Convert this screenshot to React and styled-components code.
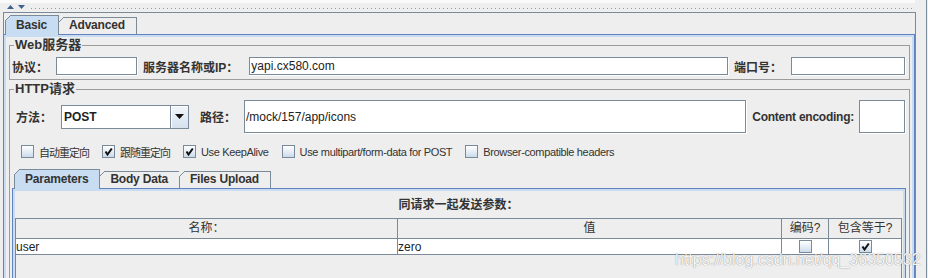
import styled, { createGlobalStyle } from "styled-components";

const GlobalStyle = createGlobalStyle`
  html, body {
    margin: 0;
    padding: 0;
    background: #eeeeee;
  }
  body {
    font-family: "Liberation Sans", "Noto Sans CJK SC", sans-serif;
    font-size: 12px;
    color: #333333;
  }
`;

const Page = styled.div`
  position: relative;
  display: flex;
  align-items: flex-start;
  width: 928px;
  height: 278px;
  overflow: hidden;
  background: #eeeeee;
`;

const Main = styled.div`
  flex: none;
  width: 916px;
`;

const Gutter = styled.div`
  align-self: stretch;
  flex: 1;
  margin-right: 1px;
  border-right: 1px solid #7a8a99;
`;

const TopStrip = styled.div`
  width: 915px;
  height: 3px;
  background: #fafafa;
`;

const SplitBar = styled.div`
  display: flex;
  align-items: flex-start;
  height: 9px;
  padding-left: 7px;
  gap: 4px;
  svg {
    margin-top: 2px;
  }
`;

const Dots = styled.div`
  flex: 1;
  height: 1px;
  margin: 5px 3px 0 2px;
  background-image: linear-gradient(to right, #8c99a6 1px, transparent 1px);
  background-size: 4px 1px;
`;

const Frame = styled.div`
  box-sizing: border-box;
  width: 913px;
  margin-left: 3px;
  padding-top: 2px;
  border: 1px solid #7a8a99;
  border-bottom: none;
`;

const TabRow = styled.div`
  display: flex;
  align-items: flex-end;
  height: 19px;
  padding-left: ${(p) => p.$pl}px;
  margin-top: ${(p) => p.$mt || 0}px;
`;

const Tab = styled.div`
  position: relative;
  box-sizing: border-box;
  height: ${(p) => (p.$active ? 20 : 17)}px;
  margin-bottom: ${(p) => (p.$active ? -1 : 0)}px;
  margin-left: -1px;
  padding: 0 11px 0 10px;
  border: 1px solid #7a8a99;
  border-bottom: none;
  background: ${(p) => (p.$active ? "#c8ddf2" : "#eeeeee")};
  font-weight: bold;
  font-size: 12px;
  letter-spacing: -0.2px;
  line-height: ${(p) => (p.$active ? 18 : 15)}px;
  color: #333333;
  white-space: nowrap;
  z-index: ${(p) => (p.$active ? 1 : 0)};
  &:first-child {
    margin-left: 0;
  }
  &::before {
    content: "";
    position: absolute;
    left: -1px;
    top: -1px;
    width: 6px;
    height: 6px;
    background: linear-gradient(
      to bottom right,
      #eeeeee 0 calc(50% - 0.6px),
      #7a8a99 calc(50% - 0.6px) calc(50% + 0.6px),
      transparent calc(50% + 0.6px)
    );
  }
`;

const TabPanel = styled.div`
  box-sizing: border-box;
  margin-left: ${(p) => (p.$outer ? -1 : 0)}px;
  padding: ${(p) => p.$pad};
  border: 1px solid #6382bf;
  border-bottom: none;
  box-shadow: inset 2px 2px 0 #c8ddf2, inset -2px 0 0 #c8ddf2;
`;

const Group = styled.fieldset`
  margin: ${(p) => p.$mt}px 0 0;
  padding: ${(p) => p.$pt}px 3px 4px 2px;
  border: 1px solid #9c9c9c;
  min-inline-size: 0;
`;

const Legend = styled.legend`
  margin-left: 2px;
  padding: 0 1px;
  font-weight: bold;
  font-size: 13px;
  line-height: 14px;
  color: #333333;
`;

const Row = styled.div`
  display: flex;
  align-items: center;
  height: ${(p) => p.$h}px;
  padding-right: 1px;
`;

const Label = styled.span`
  flex: none;
  margin-left: ${(p) => p.$ml || 0}px;
  margin-right: ${(p) => p.$mr ?? 8}px;
  font-weight: bold;
  font-size: 12px;
  letter-spacing: ${(p) => (p.$latin ? "-0.25px" : "0")};
  color: #333333;
  white-space: nowrap;
`;

const Field = styled.input`
  box-sizing: border-box;
  flex: ${(p) => (p.$w ? "none" : 1)};
  width: ${(p) => (p.$w ? `${p.$w}px` : "auto")};
  min-width: 0;
  height: ${(p) => p.$h}px;
  margin: 0;
  padding: 0 1px;
  border: 1px solid #7a8a99;
  box-shadow: 1px 1px 0 #ffffff;
  background: #ffffff;
  font: 12px "Liberation Sans", sans-serif;
  color: #222222;
  outline: none;
`;

const Combo = styled.div`
  box-sizing: border-box;
  display: flex;
  width: 128px;
  height: 24px;
  border: 1px solid #7a8a99;
  background: #ffffff;
`;

const ComboText = styled.div`
  flex: 1;
  padding-left: 2px;
  font-weight: bold;
  font-size: 12px;
  line-height: 22px;
  color: #222222;
`;

const ComboButton = styled.div`
  display: flex;
  align-items: center;
  justify-content: center;
  width: 17px;
  border-left: 1px solid #7a8a99;
  background: linear-gradient(to bottom, #f2f6fa, #d5e1ed);
  box-shadow: inset 1px 1px 0 #ffffff;
`;

const CheckRow = styled.div`
  display: flex;
  align-items: center;
  gap: 13px;
  height: 13px;
  margin-top: 12px;
  padding-left: 9px;
`;

const CheckItem = styled.label`
  display: flex;
  align-items: center;
  gap: 5px;
  font-size: 11px;
  letter-spacing: ${(p) => (p.$cjk ? "-1px" : "-0.35px")};
  color: #333333;
  white-space: nowrap;
`;

const Box = styled.span`
  box-sizing: border-box;
  display: inline-flex;
  align-items: center;
  justify-content: center;
  flex: none;
  width: 13px;
  height: 13px;
  border: 1px solid #7a8a99;
  background: linear-gradient(to bottom, #ffffff, #e3ecf5 55%, #cbdbea);
`;

const Caption = styled.div`
  padding-top: 8px;
  margin-bottom: 5px;
  text-align: center;
  font-weight: bold;
  font-size: 12px;
  line-height: 16px;
  color: #333333;
`;

const Table = styled.div`
  display: grid;
  grid-template-columns: 382px 384px 47px 1fr;
  grid-auto-rows: min-content;
  height: 80px;
  border: 1px solid #7a8a99;
  border-bottom: none;
`;

const HeadCell = styled.div`
  height: 19px;
  border-bottom: 1px solid #7a8a99;
  border-right: ${(p) => (p.$last ? "none" : "1px solid #7a8a99")};
  font-size: 12px;
  line-height: 19px;
  text-align: center;
  color: #333333;
`;

const Cell = styled.div`
  display: flex;
  align-items: center;
  justify-content: ${(p) => (p.$center ? "center" : "flex-start")};
  height: 15px;
  border-bottom: 1px solid #7a8a99;
  border-right: ${(p) => (p.$last ? "none" : "1px solid #7a8a99")};
  background: #ffffff;
  font-size: 12px;
  color: #222222;
`;

const Watermark = styled.div`
  position: absolute;
  left: 675px;
  top: 251px;
  font-family: "Liberation Sans", sans-serif;
  font-size: 16px;
  color: rgba(255, 255, 255, 0.95);
  text-shadow: 0 0 1px rgba(60, 60, 60, 0.7);
  pointer-events: none;
`;

function CheckBox({ checked }) {
  return (
    <Box>
      {checked && (
        <svg width="9" height="9" viewBox="0 0 9 9">
          <path d="M1.5 4.5 L3.5 7.5 L7.8 1.5" fill="none" stroke="#111111" strokeWidth="2" />
        </svg>
      )}
    </Box>
  );
}

const options = [
  { text: "自动重定向", cjk: true, checked: false },
  { text: "跟随重定向", cjk: true, checked: true },
  { text: "Use KeepAlive", checked: true },
  { text: "Use multipart/form-data for POST", checked: false },
  { text: "Browser-compatible headers", checked: false },
];

export default function App() {
  return (
    <>
      <GlobalStyle />
      <Page>
        <Main>
          <TopStrip />
          <SplitBar>
            <svg width="7" height="4" viewBox="0 0 7 4">
              <path d="M0 4 L3.5 0 L7 4 Z" fill="#41608c" />
            </svg>
            <svg width="7" height="4" viewBox="0 0 7 4">
              <path d="M0 0 L7 0 L3.5 4 Z" fill="#41608c" />
            </svg>
            <Dots />
          </SplitBar>
          <Frame>
            <TabRow $pl={1}>
              <Tab $active>Basic</Tab>
              <Tab>Advanced</Tab>
            </TabRow>
            <TabPanel $outer $pad="3px 4px 0 5px">
              <Group $mt={0} $pt={5}>
                <Legend>Web服务器</Legend>
                <Row $h={18}>
                  <Label>协议：</Label>
                  <Field $w={81} $h={18} readOnly value="" />
                  <Label $ml={6} $mr={11}>服务器名称或IP：</Label>
                  <Field $h={18} readOnly value="yapi.cx580.com" />
                  <Label $ml={6} $mr={9}>端口号：</Label>
                  <Field $w={114} $h={18} readOnly value="" />
                </Row>
              </Group>
              <Group $mt={2} $pt={4}>
                <Legend>HTTP请求</Legend>
                <Row $h={33}>
                  <Label $ml={4} $mr={9}>方法：</Label>
                  <Combo>
                    <ComboText>POST</ComboText>
                    <ComboButton>
                      <svg width="9" height="5" viewBox="0 0 9 5">
                        <path d="M0 0 L9 0 L4.5 5 Z" fill="#111111" />
                      </svg>
                    </ComboButton>
                  </Combo>
                  <Label $ml={11} $mr={8}>路径：</Label>
                  <Field $h={33} readOnly value="/mock/157/app/icons" />
                  <Label $ml={6} $mr={5} $latin>Content encoding:</Label>
                  <Field $w={46} $h={33} readOnly value="" />
                </Row>
                <CheckRow>
                  {options.map((o) => (
                    <CheckItem key={o.text} $cjk={o.cjk}>
                      <CheckBox checked={o.checked} />
                      {o.text}
                    </CheckItem>
                  ))}
                </CheckRow>
                <TabRow $pl={2} $mt={11}>
                  <Tab $active>Parameters</Tab>
                  <Tab>Body Data</Tab>
                  <Tab>Files Upload</Tab>
                </TabRow>
                <TabPanel $pad="0 3px 0 2px">
                  <Caption>同请求一起发送参数：</Caption>
                  <Table>
                    <HeadCell>名称：</HeadCell>
                    <HeadCell>值</HeadCell>
                    <HeadCell>编码?</HeadCell>
                    <HeadCell $last>包含等于?</HeadCell>
                    <Cell>user</Cell>
                    <Cell>zero</Cell>
                    <Cell $center>
                      <CheckBox />
                    </Cell>
                    <Cell $center $last>
                      <CheckBox checked />
                    </Cell>
                  </Table>
                </TabPanel>
              </Group>
            </TabPanel>
          </Frame>
        </Main>
        <Gutter />
        <Watermark>https://blog.csdn.net/qq_36350532</Watermark>
      </Page>
    </>
  );
}
